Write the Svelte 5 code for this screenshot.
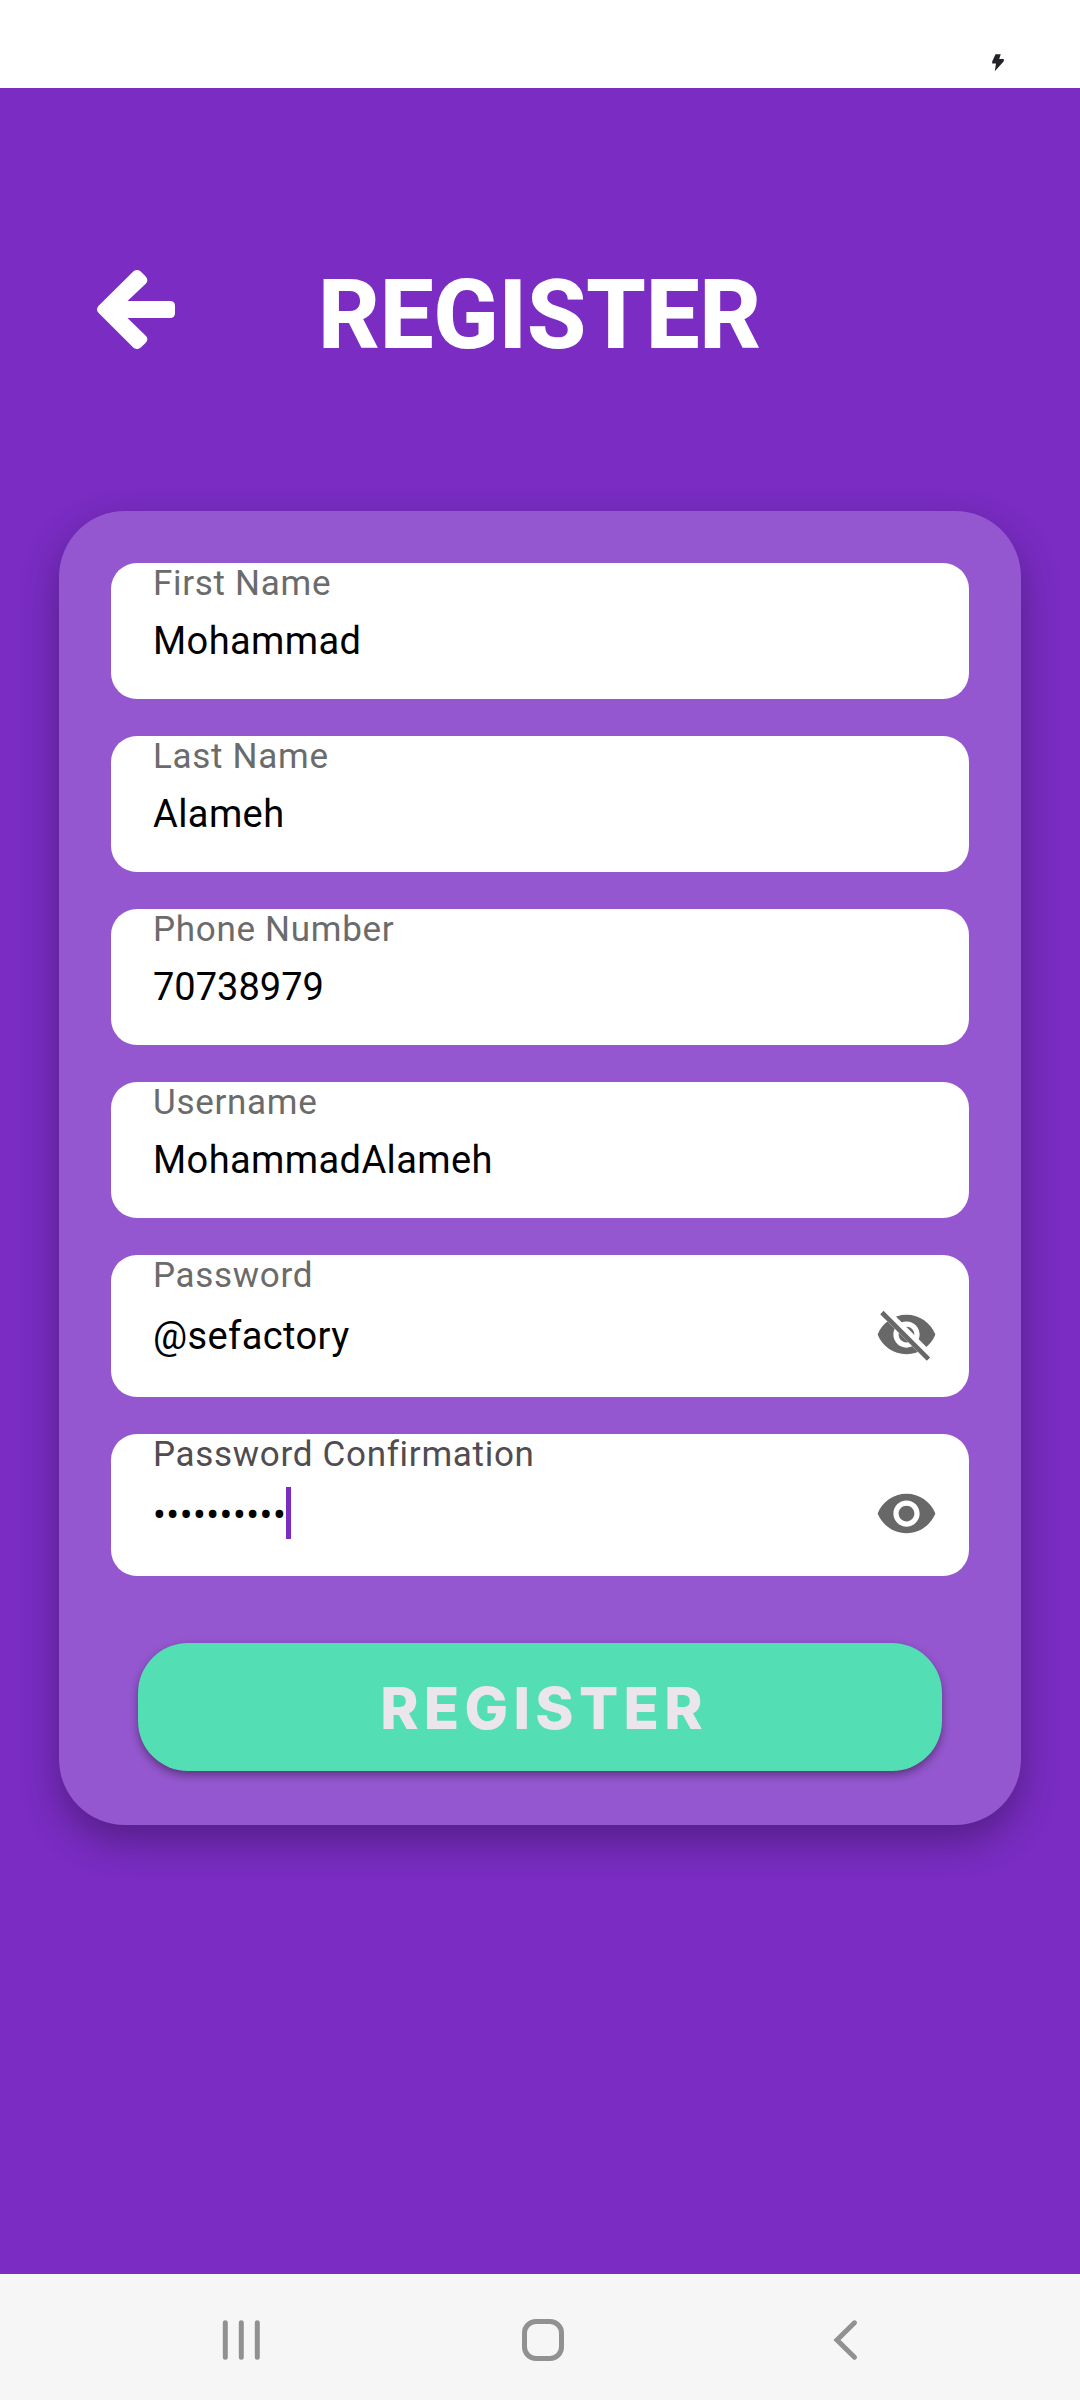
<script>
  const fields = [
    { label: 'First Name', value: 'Mohammad' },
    { label: 'Last Name', value: 'Alameh' },
    { label: 'Phone Number', value: '70738979', numeric: true },
    { label: 'Username', value: 'MohammadAlameh' },
    { label: 'Password', value: '@sefactory', icon: 'off' },
    { label: 'Password Confirmation', value: '••••••••••', icon: 'on', focused: true },
  ];
</script>

<div class="screen">
  <div class="status">
    <svg class="bolt" viewBox="0 0 12 18"><path d="M3.5 0.3H8.7L7.2 5H11.8V7.2L2.8 17.2L4 9.4H.2V7.5Z" /></svg>
  </div>
  <main>
    <header>
      <svg class="back" viewBox="97 270 78 79"><path d="M98.4 306L133.5 271.3Q137 268.6 140.5 271.3L145.5 276.3Q149 280 146 283.5L127.5 301H170Q175 301 175 306V313Q175 318 170 318H127.5L146 336Q149 339.5 145.5 343L140.5 347.7Q137 350.4 133.5 347.7L98.4 312.8Q95.6 309.4 98.4 306Z" /></svg>
      <h1>REGISTER</h1>
    </header>
    <section class="card">
      {#each fields as f}
        <div class="field" class:tall={f.icon} class:focused={f.focused} class:numeric={f.numeric}>
          <div class="texts">
            <span class="label">{f.label}</span>
            <span class="value">{f.value}{#if f.focused}<i class="caret"></i>{/if}</span>
          </div>
          {#if f.icon}
            <svg class="eye" viewBox="0 0 24 24">
              <mask id="cut"><rect width="24" height="24" fill="#fff" /><path d="M2 4.27L19.73 22L22.27 19.46L4.54 1.73Z" fill="#000" /></mask>
              <path mask={f.icon === 'off' ? 'url(#cut)' : undefined} d="M12 4.5C7 4.5 2.73 7.61 1 12c1.73 4.39 6 7.5 11 7.5s9.27-3.11 11-7.5c-1.73-4.39-6-7.5-11-7.5zM12 17c-2.76 0-5-2.24-5-5s2.24-5 5-5 5 2.24 5 5-2.24 5-5 5zm0-8c-1.66 0-3 1.34-3 3s1.34 3 3 3 3-1.34 3-3-1.34-3-3-3z" />
              {#if f.icon === 'off'}<path class="slash" d="M3.27 4.27L19.74 20.74" />{/if}
            </svg>
          {/if}
        </div>
      {/each}
      <button>REGISTER</button>
    </section>
  </main>
  <nav>
    <svg viewBox="0 0 42 42"><path d="M5.3 3.8V38.2M21.3 3.8V38.2M37.3 3.8V38.2" /></svg>
    <svg viewBox="0 0 42 42"><rect x="2.5" y="2.5" width="37" height="37" rx="11.5" /></svg>
    <svg viewBox="0 0 42 42"><path d="M30.5 3.8L13 21L30.5 38.2" /></svg>
  </nav>
</div>

<style>
  :global(body) { margin: 0; }
  .screen { display: flex; flex-direction: column; width: 1080px; height: 2400px; font-family: Roboto, sans-serif; background: #7a2cc3; }
  .status { display: flex; justify-content: flex-end; height: 88px; padding: 54px 76px 0 0; box-sizing: border-box; background: #fff; }
  .bolt { width: 12px; height: 18px; fill: #222326; }
  main { flex: 1; min-height: 0; }
  header { display: flex; align-items: flex-start; height: 423px; padding: 182px 0 0 97px; box-sizing: border-box; }
  .back { width: 78px; height: 79px; fill: #fff; }
  h1 { margin: 17px 0 0 143px; font-size: 96px; line-height: 56px; font-weight: 800; letter-spacing: -0.3px; color: #fff; white-space: nowrap; }
  .card { display: flex; flex-direction: column; gap: 37px; width: 962px; height: 1314px; margin: 0 59px; padding: 52px; box-sizing: border-box; border-radius: 66px; background: #9457cf; box-shadow: 0 16px 38px rgba(0, 0, 0, .31); }
  .field { display: flex; justify-content: space-between; height: 136px; padding: 0 31px 0 42px; box-sizing: border-box; border-radius: 26px; background: #fff; flex: none; }
  .tall { height: 142px; }
  .texts { display: flex; flex-direction: column; white-space: nowrap; }
  .label { height: 42px; line-height: 42px; font-size: 35px; letter-spacing: .7px; color: #6b6b6b; }
  .value { display: flex; align-items: flex-start; height: 52px; margin-top: 10px; line-height: 52px; font-size: 38px; color: #000; letter-spacing: .4px; }
  .tall .value { margin-top: 13px; }
  .numeric .value { letter-spacing: 0; }
  .focused .label { color: #504c50; }
  .focused .value { letter-spacing: .5px; }
  .caret { width: 5px; height: 52px; margin-top: -2px; background: #7a2cc3; }
  .eye { width: 63px; height: 63px; margin-top: 48px; fill: #686868; }
  .slash { stroke: #686868; stroke-width: 1.8; stroke-linecap: square; }
  button { flex: none; width: 804px; height: 128px; margin: 30px 27px 0; padding: 2px 0 0 8px; border: 0; border-radius: 50px; background: #53deb4; color: #ebe5ec; font: 800 58px Inter, sans-serif; letter-spacing: 5.3px; box-shadow: 0 4px 8px rgba(0, 0, 0, .38); }
  nav { display: flex; align-items: center; justify-content: space-between; height: 126px; padding: 6px 214px 0 220px; box-sizing: border-box; background: #f6f6f6; }
  nav svg { width: 42px; height: 42px; fill: none; stroke: #919191; stroke-width: 5; stroke-linecap: round; }
</style>
